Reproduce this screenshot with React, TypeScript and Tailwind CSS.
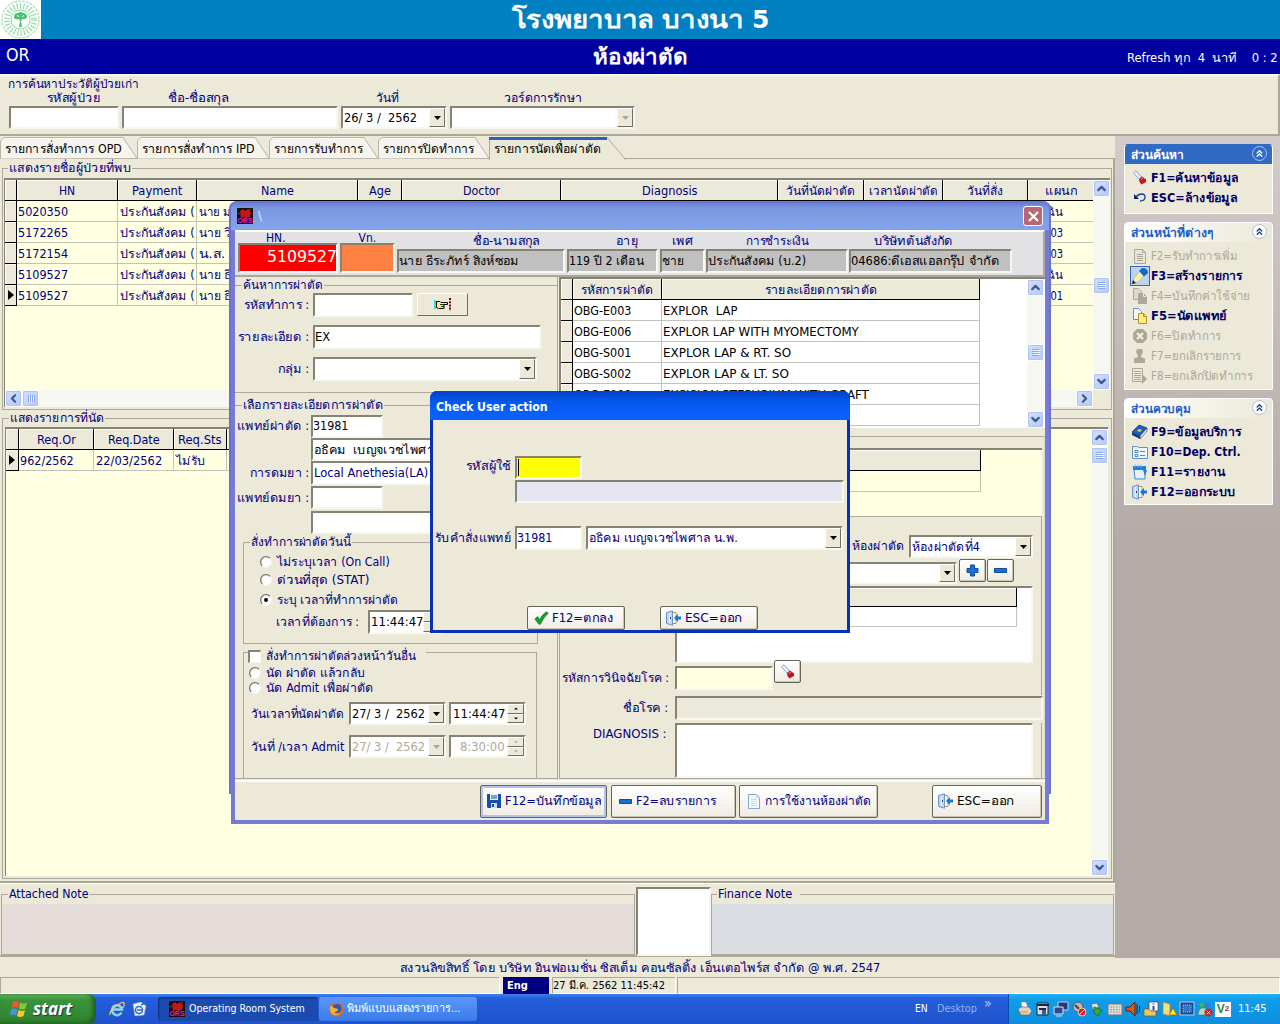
import { useLayoutEffect, useRef, useState, type ReactNode } from "react";
import { ChevronDown, ChevronUp, ChevronLeft, ChevronRight, ChevronsUp } from "lucide-react";

const SUNKEN = "border-2 border-t-[#868375] border-l-[#868375] border-b-[#f8f7f0] border-r-[#f8f7f0]";
const RAISED = "border border-t-white border-l-white border-b-[#716f64] border-r-[#716f64]";
const HEAD = "flex items-center justify-center bg-[#ece9d8] border-r border-b border-black overflow-hidden shadow-[inset_1px_1px_0_#fbfaf4] pt-[1px]";
const XPBTN = "flex items-center rounded-[2px] border border-[#66655a] bg-gradient-to-b from-white to-[#efece2] shadow-[inset_-1px_-1px_0_#c9c5b4]";

/* Text run fitted to a known width. */
function T({ w, c = "", children }: { w: number; c?: string; children: ReactNode }) {
  const ref = useRef<HTMLSpanElement>(null);
  const [k, setK] = useState(1);
  useLayoutEffect(() => {
    if (ref.current) setK(w / ref.current.offsetWidth);
  }, [w, children]);
  return (
    <span className={"inline-block shrink-0 whitespace-pre " + c} style={{ width: w }}>
      <span ref={ref} className="inline-block origin-left" style={{ transform: `scaleX(${k})` }}>{children}</span>
    </span>
  );
}

function Arrow({ dim = false }: { dim?: boolean }) {
  return (
    <span className={"flex h-full w-[16px] shrink-0 items-center justify-center bg-[#ece9d8] " + RAISED}>
      <svg width="7" height="4"><path d="M0 0h7L3.5 4z" fill={dim ? "#aca899" : "#000"} /></svg>
    </span>
  );
}

function Field({ c, children, combo, dim }: { c: string; children?: ReactNode; combo?: boolean; dim?: boolean }) {
  return (
    <div className={"flex shrink-0 items-center overflow-hidden " + SUNKEN + " " + c}>
      <div className="flex h-full flex-1 items-center overflow-hidden">{children}</div>
      {combo && <Arrow dim={dim} />}
    </div>
  );
}

function Spin({ dim = false }: { dim?: boolean }) {
  const f = dim ? "#aca899" : "#000";
  return (
    <span className="flex h-full w-[17px] shrink-0 flex-col">
      <span className={"flex flex-1 items-center justify-center bg-[#ece9d8] " + RAISED}><svg width="4" height="3"><path d="M0 2.5h4L2 .5z" fill={f} /></svg></span>
      <span className={"flex flex-1 items-center justify-center bg-[#ece9d8] " + RAISED}><svg width="4" height="3"><path d="M0 .5h4L2 2.5z" fill={f} /></svg></span>
    </span>
  );
}

function SB({ children }: { children: ReactNode }) {
  return (
    <span className="flex h-[17px] w-[17px] shrink-0 items-center justify-center rounded-[2px] border border-white bg-gradient-to-br from-[#d3e0fd] to-[#b4c9f8] text-[#3f5a8f] shadow-[inset_0_0_0_1px_#b0c4f2]">
      {children}
    </span>
  );
}
const Grip = () => (
  <svg width="8" height="8" stroke="#8ba9ea"><path d="M0 .5h7M0 2.5h7M0 4.5h7M0 6.5h7" /><path d="M1 1.5h7M1 3.5h7M1 5.5h7" stroke="#eef4fe" /></svg>
);

function VScroll({ gap }: { gap: string }) {
  return (
    <div className="flex w-[17px] shrink-0 flex-col bg-[#f7f7f2]">
      <SB><ChevronUp size={13} strokeWidth={4} /></SB>
      <div className={gap} />
      <SB><Grip /></SB>
      <div className="flex-1" />
      <SB><ChevronDown size={13} strokeWidth={4} /></SB>
    </div>
  );
}

function Radio({ on = false }: { on?: boolean }) {
  return (
    <svg width="12" height="12" className="shrink-0">
      <circle cx="6" cy="6" r="5.2" fill="#fff" stroke="#fbfaf5" />
      <path d="M2.2 9.8A5.2 5.2 0 0 1 9.8 2.2" fill="none" stroke="#7d7a6c" strokeWidth="1.3" />
      {on && <circle cx="6" cy="6" r="2" />}
    </svg>
  );
}

/* ---------- icons ---------- */
const Torch = () => (
  <svg width="16" height="16" viewBox="0 0 16 16"><path d="M1.500 3 4 .8 9.500 7 7 9z" fill="#e8f2fb" stroke="#86a8cc" /><path d="M7 9.500 10 6.500 14 9.500 14 12 9.500 14.500 7.500 12z" fill="#c4141c" /><path d="M9 9.500 11 8" stroke="#f79a9a" /></svg>
);
const Undo = () => (
  <svg width="14" height="12" viewBox="0 0 14 12"><path d="M1 2v5h5z" fill="#0a246a" /><path d="M3 5C6 1 12 1 12 5S9 9 7 9" fill="none" stroke="#1c3f94" strokeWidth="1.3" /></svg>
);
const Door = () => (
  <svg width="17" height="16" viewBox="0 0 17 16"><path d="M8 2.500h3v11H8" fill="#fff" stroke="#c08a50" /><path d="M1.500 2.500 7.500.8v14.400l-6-1.700z" fill="#bcd7f5" stroke="#6c92c8" /><path d="M4.500 3v10" stroke="#e9f3fe" /><path d="M5.500 7v2" stroke="#345" /><path d="M9 8l4-4v2.500h3v3h-3V12z" fill="#1976d2" /></svg>
);
const Doc = ({ dim = false }: { dim?: boolean }) => (
  <svg width="14" height="15" viewBox="0 0 14 15"><path d="M1.500.5h8l3 3v11h-11z" fill={dim ? "#e8e6dc" : "#f2f8fe"} stroke={dim ? "#aca899" : "#88a8d4"} /><path d="M9.500.5v3h3M4 5.500h6M4 7.500h6M4 9.500h6M4 11.500h6" fill="none" stroke={dim ? "#aca899" : "#c5dcf2"} /></svg>
);
const Pages = ({ dim = false }: { dim?: boolean }) => (
  <svg width="16" height="16" viewBox="0 0 16 16"><path d="M1.500.5h5l3 3v8h-8z" fill={dim ? "#dcd9cc" : "#f4f9ff"} stroke={dim ? "#aca899" : "#6a90cc"} /><path d="M6.500 5.500h5l3 3v7h-8z" fill={dim ? "#aca899" : "#ffee88"} stroke={dim ? "#aca899" : "#c09018"} /><path d="M11.500 5.500v3h3" fill="none" stroke={dim ? "#ece9d8" : "#c09018"} /></svg>
);
const Pencil = () => (
  <span className="flex h-[20px] w-[20px] items-center justify-center border border-[#316ac5] bg-[#c1d2ee]">
    <svg width="18" height="18" viewBox="0 0 18 18"><path d="M1 17 3 11 9 4 14 8 7 15z" fill="#f7efb0" stroke="#a8a070" strokeWidth=".6" /><path d="M8 4 11 1Q17 1 17 6L13 9.500z" fill="#1767c4" /><path d="M1 17 2 13 5 16z" fill="#222" /></svg>
  </span>
);
const Cross = () => (
  <svg width="16" height="16" viewBox="0 0 16 16"><path d="M5 1h6l4 4v6l-4 4H5l-4-4V5z" fill="#aca899" /><path d="M5 5l6 6M11 5l-6 6" stroke="#f4f2e8" strokeWidth="2" /></svg>
);
const Person = () => (
  <svg width="15" height="16" viewBox="0 0 15 16"><path d="M5 1h5l1 3-2 4v1l4 1.500V15H2v-4.500L6 9V8L4 4z" fill="#aca899" /></svg>
);
const DocArrow = () => (
  <svg width="17" height="16" viewBox="0 0 17 16"><path d="M1.500.5h10v13h-10z" fill="#ece9d8" stroke="#aca899" /><path d="M3 3.500h7M3 5.500h7M3 7.500h7M3 9.500h7M3 11.500h7" stroke="#aca899" /><path d="M11 6l5 5-5 5z" fill="#aca899" /></svg>
);
const Book = () => (
  <svg width="17" height="16" viewBox="0 0 17 16"><path d="M1 8 8 1l8 3-7 8z" fill="#1d62b8" stroke="#0b356e" strokeWidth=".7" /><path d="M1 8v3l8 4V12z" fill="#0e3c7c" /><path d="M9 12v3l7-8V4z" fill="#e6edf6" stroke="#0b356e" strokeWidth=".6" /><path d="M8 5l3 1-2 2-3-1z" fill="#f3c94c" /></svg>
);
const FormIcon = () => (
  <svg width="16" height="14" viewBox="0 0 16 14"><path d="M.5 1.500h5l1 1h9v11H.5z" fill="#edf6ff" stroke="#5b93d0" /><path d="M3 5.500h3v2H3zM3 9.500h3v2H3z" fill="none" stroke="#4f8bcd" /><path d="M8 6.500h5M8 10.500h5" stroke="#4f8bcd" /></svg>
);
const Pad = () => (
  <svg width="16" height="16" viewBox="0 0 16 16"><path d="M2 4.500h11v10.500H3z" fill="#e4f2ff" stroke="#4187ce" /><path d="M1 2h13v4H1z" fill="#1f7fd6" /><path d="M3 .5v3M6 .5v3M9 .5v3" stroke="#7fb8f0" /><path d="M11 6h4l-2 6z" fill="#1f7fd6" /></svg>
);
const Check = () => (
  <svg width="15" height="14" viewBox="0 0 15 14"><path d="M.8 8 3.500 5.500 5.800 8.500Q8.500 3 12.500.8L14.300 2Q9.500 6.500 6.500 13.200H4.800z" fill="#15a22a" stroke="#0a7a1a" strokeWidth=".6" /></svg>
);
const Floppy = () => (
  <svg width="14" height="14" viewBox="0 0 14 14"><path d="M0 0h14v14H1l-1-1z" fill="#174ea6" /><path d="M3 0h8v6H3z" fill="#e8f0fb" /><path d="M4 2h6M4 4h6" stroke="#174ea6" /><path d="M4 9h6v5H4z" fill="#c9dcf4" /><path d="M5 10h2v3H5z" fill="#174ea6" /></svg>
);
const Plus = () => <svg width="13" height="13"><path d="M4.500 1h4v3.500H12v4H8.500V12h-4V8.500H1v-4h3.500z" fill="#1473d0" stroke="#0a4fa0" /></svg>;
const Minus = () => <svg width="13" height="13"><path d="M.5 4.500h12v4H.5z" fill="#1473d0" stroke="#0a4fa0" /></svg>;
const Hand = () => (
  <svg width="18" height="13" viewBox="0 0 18 13"><path d="M0 2h2v9H0z" fill="#2ee0e0" /><path d="M2.500 3.500H6l1 1h6.500v2H10v4H4.500l-2-1z" fill="#f8ec80" stroke="#000" /><path d="M10 8.500H7M6 6.500h4" stroke="#000" strokeWidth=".8" /><path d="M16 0v13" stroke="#800" strokeWidth="2" strokeDasharray="2 1.200" /></svg>
);
function OrsIcon() {
  return (
    <span className="relative flex h-[16px] w-[16px] shrink-0 items-end justify-center overflow-hidden bg-[#180c08]">
      <svg width="16" height="16" className="absolute inset-0"><path d="M3 3 6 1l2 2 3-2 3 3-1 5-3 1-3-1-3 1z" fill="#c2181c" /><path d="M1 5l2 1M12 2l2-1" stroke="#1f7a2c" /></svg>
      <span className="relative font-['Liberation_Sans'] text-[7px] leading-[7px] font-bold text-[#e020c8]">ORS</span>
    </span>
  );
}

function Logo() {
  return (
    <svg width="41" height="39" viewBox="0 0 41 39" className="shrink-0 bg-white">
      <circle cx="20.500" cy="19.500" r="18.500" fill="none" stroke="#a4dfb4" strokeWidth="1.200" strokeDasharray="3 1" />
      <circle cx="20.500" cy="19.500" r="13.500" fill="none" stroke="#94dca8" strokeWidth="6" strokeDasharray="1.200 2.100" />
      <circle cx="20.500" cy="19.500" r="9.500" fill="#fff" stroke="#8fd8a2" />
      <path d="M14 17q0-4 4-4 2.500-2 5 0 4 0 4 4-1 3-5 2l-1 2 1 6h-3l1-6-1-2q-5 1-5-2z" fill="#4cc271" />
      <path d="M17 15.500l2 1M24 15.500l-2 1" stroke="#fff" />
    </svg>
  );
}

/* ---------- top ---------- */
function Search() {
  return (
    <div className="h-[62px] shrink-0 border-t-2 border-r-2 border-b-2 border-t-[#f8f6ec] border-r-[#aca899] border-b-[#aca899] pt-[1px] pl-[8px] leading-[14px]">
      <T w={131} c="block">การค้นหาประวัติผู้ป่วยเก่า</T>
      <div className="-mt-[1px] mb-[1px] flex h-[15px] items-center">
        <T w={53} c="ml-[39px]">รหัสผู้ป่วย</T>
        <T w={61} c="ml-[68px]">ชื่อ-ชื่อสกุล</T>
        <T w={23} c="ml-[147px]">วันที่</T>
        <T w={78} c="ml-[105px]">วอร์ดการรักษา</T>
      </div>
      <div className="flex gap-[3px] pl-[1px]">
        <Field c="h-[23px] w-[110px] bg-white" />
        <Field c="h-[23px] w-[216px] bg-white" />
        <Field c="h-[23px] w-[106px] bg-white" combo><T w={73} c="pl-[1px] text-black">26/ 3 /  2562</T></Field>
        <Field c="h-[23px] w-[185px] bg-white" combo dim />
      </div>
    </div>
  );
}

const TABS: [string, number, number][] = [
  ["รายการสั่งทำการ OPD", 117, 137],
  ["รายการสั่งทำการ IPD", 112, 132],
  ["รายการรับทำการ", 89, 109],
  ["รายการปิดทำการ", 91, 111],
];
function Tabs() {
  return (
    <div className="flex h-[23px] shrink-0 border-b border-[#aca899] pt-[1px]">
      {TABS.map(([t, w, full]) => (
        <div key={t} className="relative flex shrink-0 items-center pt-[2px] pl-[5px]" style={{ width: full }}>
          <svg className="absolute inset-0" width={full} height="22"><path d={`M.5 22V4L4 .5H${full - 14}L${full} 21.500z`} fill="#f6f4ec" stroke="#b8b4a6" /></svg>
          <T w={w} c="relative text-black">{t}</T>
        </div>
      ))}
      <div className="relative flex w-[140px] items-center pt-[2px] pl-[5px]">
        <svg className="absolute inset-0" width="140" height="23"><path d="M.5 23V.5H118L137 23" fill="#ece9d8" stroke="#aca899" /><path d="M0 1.500h118" stroke="#2f62b5" strokeWidth="3" /></svg>
        <T w={107} c="relative text-black">รายการนัดเพื่อผ่าตัด</T>
      </div>
    </div>
  );
}

const COLS = "grid grid-cols-[12px_101px_79px_161px_44px_159px_217px_86px_79px_85px_66px]";
const HEADS: [string, number][] = [["", 1], ["HN", 16], ["Payment", 50], ["Name", 33], ["Age", 22], ["Doctor", 37], ["Diagnosis", 55], ["วันที่นัดผ่าตัด", 69], ["เวลานัดผ่าตัด", 69], ["วันที่สั่ง", 36], ["แผนก", 32]];
const ROWS: [string, string, number, string][] = [
  ["5020350", "นาย มา", 38, "ฉุกเฉิน"],
  ["5172265", "นาย วี", 32, "OPD03"],
  ["5172154", "น.ส. จ", 38, "OPD03"],
  ["5109527", "นาย ธี", 32, "ฉุกเฉิน"],
  ["5109527", "นาย ธี", 32, "OPD01"],
];
const CELL = "flex items-center overflow-hidden border-r border-b border-[#c4c2b8] pt-[2px] pl-[1px]";
const MARK = "flex items-center justify-center border-r border-b border-black bg-[#ece9d8] shadow-[inset_1px_1px_0_#fbfaf4]";
const Tri = () => <svg width="6" height="10"><path d="M0 0l6 5-6 5z" /></svg>;

function PatientGrid() {
  return (
    <fieldset className="ml-[2px] h-[249px] w-[1110px] min-w-0 shrink-0 border border-[#aca899]">
      <legend className="ml-[5px] h-[15px] px-[1px] leading-[14px]"><T w={122}>แสดงรายชื่อผู้ป่วยที่พบ</T></legend>
      <div className="ml-[1px] mt-[2px] flex h-[229px] w-[1106px] border-t-2 border-l border-[#868375] bg-[#ffffe1]">
        <div className="flex min-w-0 flex-1 flex-col overflow-hidden">
          <div className={COLS + " h-[21px] shrink-0"}>
            {HEADS.map(([h, w], i) => <div key={i} className={HEAD}><T w={w}>{h}</T></div>)}
          </div>
          {ROWS.map((r, i) => (
            <div key={i} className={COLS + " h-[21px] shrink-0"}>
              <div className={MARK}>{i === 4 && <Tri />}</div>
              <div className={CELL}><T w={50}>{r[0]}</T></div>
              <div className={CELL}><T w={75} c="ml-[1px]">ประกันสังคม (</T></div>
              <div className={CELL}><T w={r[2]} c="ml-[1px]">{r[1]}</T></div>
              <div className={CELL} /><div className={CELL} /><div className={CELL} /><div className={CELL} /><div className={CELL} /><div className={CELL} />
              <div className={CELL}><T w={34}>{r[3]}</T></div>
            </div>
          ))}
          <div className="flex-1" />
          <div className="flex h-[17px] bg-[#f7f7f2]">
            <SB><ChevronLeft size={13} strokeWidth={4} /></SB>
            <SB><span className="rotate-90"><Grip /></span></SB>
            <div className="flex-1" />
            <SB><ChevronRight size={13} strokeWidth={4} /></SB>
          </div>
        </div>
        <div className="flex flex-col">
          <div className="flex flex-1"><VScroll gap="h-[80px]" /></div>
          <div className="h-[17px] bg-[#ece9d8]" />
        </div>
      </div>
    </fieldset>
  );
}

const C2 = "grid grid-cols-[13px_75px_80px_53px_60px] h-[21px] shrink-0";
function RequestGrid() {
  return (
    <fieldset className="ml-[2px] mt-[1px] h-[468px] w-[1110px] min-w-0 shrink-0 border border-[#aca899]">
      <legend className="ml-[6px] h-[15px] px-[1px] leading-[14px]"><T w={94}>แสดงรายการที่นัด</T></legend>
      <div className="ml-[2px] mt-[1px] flex h-[449px] w-[1103px] border-t-2 border-l border-[#868375] bg-[#ffffe1]">
        <div className="flex-1">
          <div className={C2}>
            <div className={HEAD} /><div className={HEAD}><T w={39}>Req.Or</T></div><div className={HEAD}><T w={52}>Req.Date</T></div><div className={HEAD}><T w={44}>Req.Sts</T></div><div className={HEAD} />
          </div>
          <div className={C2}>
            <div className={MARK}><Tri /></div>
            <div className={CELL}><T w={54}>962/2562</T></div>
            <div className={CELL}><T w={66} c="ml-[1px]">22/03/2562</T></div>
            <div className={CELL}><T w={29} c="ml-[1px]">ไม่รับ</T></div>
            <div className={CELL}><T w={40}>Local</T></div>
          </div>
        </div>
        <VScroll gap="h-[1px]" />
      </div>
    </fieldset>
  );
}

function Notes() {
  return (
    <div className="flex h-[74px] shrink-0 border-t border-b-2 border-t-white border-b-[#aca899] pt-[3px]">
      <fieldset className="ml-[1px] h-[68px] w-[634px] min-w-0 border border-[#aca899]">
        <legend className="ml-[6px] h-[15px] px-[1px] leading-[14px]"><T w={80}>Attached Note</T></legend>
        <div className="mt-[2px] h-[50px] bg-[#e5dbd9]" />
      </fieldset>
      <Field c="ml-[1px] h-[69px] w-[75px] bg-white" />
      <fieldset className="h-[68px] w-[403px] min-w-0 border border-[#aca899]">
        <legend className="ml-[5px] h-[15px] pr-[8px] pl-[1px] leading-[14px]"><T w={74}>Finance Note</T></legend>
        <div className="mt-[2px] h-[50px] bg-[#d9dce1]" />
      </fieldset>
    </div>
  );
}

/* ---------- sidebar ---------- */
type Item = [ReactNode, string, number, boolean];
function Panel({ title, tw, hot, items, c }: { title: string; tw: number; hot?: boolean; items: Item[]; c: string }) {
  return (
    <div className={"flex flex-col rounded-t-[4px] border bg-[#ece9d8] " + (hot ? "border-[#316ac5] border-x-white border-b-white " : "border-white ") + c}>
      <div className={"flex h-[19px] shrink-0 items-center justify-between rounded-t-[3px] pr-[5px] pl-[6px] " + (hot ? "bg-[#316ac5] text-white" : "bg-gradient-to-r from-white to-[#ece9d8] text-[#215dc6]")}>
        <T w={tw} c="font-bold">{title}</T>
        <span className={"-mt-[2px] flex h-[15px] w-[15px] items-center justify-center rounded-full border " + (hot ? "border-[#a9c3ee]" : "border-[#b6bccb] bg-white")}>
          <ChevronsUp size={11} strokeWidth={3} color={hot ? "#fff" : "#1c3f94"} />
        </span>
      </div>
      <div className="mt-[4px] flex flex-col">
        {items.map(([icon, t, w, dim]) => (
          <div key={t} className={"flex h-[20px] items-center pl-[4px] " + (dim ? "text-[#aca899]" : "font-bold text-[#000066]")}>
            <span className="mr-[1px] flex w-[21px] shrink-0 justify-center">{icon}</span>
            <T w={w}>{t}</T>
          </div>
        ))}
      </div>
    </div>
  );
}
function Sidebar() {
  return (
    <div className="flex w-[165px] flex-col gap-[8px] bg-gradient-to-b from-[#d2cbc9] to-[#b4aaa6] to-50% pt-[8px] pl-[9px]">
      <Panel title="ส่วนค้นหา" tw={53} hot c="h-[70px] w-[149px]" items={[[<Torch />, "F1=ค้นหาข้อมูล", 87, false], [<Undo />, "ESC=ล้างข้อมูล", 86, false]]} />
      <Panel title="ส่วนหน้าที่ต่างๆ" tw={82} c="h-[168px] w-[149px]" items={[
        [<Doc dim />, "F2=รับทำการเพิ่ม", 86, true], [<Pencil />, "F3=สร้างรายการ", 91, false], [<Pages dim />, "F4=บันทึกค่าใช้จ่าย", 99, true],
        [<Pages />, "F5=นัดแพทย์", 76, false], [<Cross />, "F6=ปิดทำการ", 70, true], [<Person />, "F7=ยกเลิกรายการ", 90, true], [<DocArrow />, "F8=ยกเลิกปิดทำการ", 102, true],
      ]} />
      <Panel title="ส่วนควบคุม" tw={60} c="h-[107px] w-[149px]" items={[
        [<Book />, "F9=ข้อมูลบริการ", 90, false], [<FormIcon />, "F10=Dep. Ctrl.", 90, false], [<Pad />, "F11=รายงาน", 74, false], [<Door />, "F12=ออกระบบ", 84, false],
      ]} />
    </div>
  );
}

/* ---------- operation window ---------- */
function InfoBox({ label, lw, lc = "", w, text, tw }: { label: string; lw: number; lc?: string; w: string; text: string; tw: number }) {
  return (
    <div className={"flex shrink-0 flex-col items-center " + w}>
      <div className={"flex h-[17px] items-center " + lc}><T w={lw}>{label}</T></div>
      <Field c="h-[24px] w-full bg-[#c0c0c0]"><T w={tw} c="text-black">{text}</T></Field>
    </div>
  );
}

function FormRow({ label, lw, c, children, lead = "w-[74px]" }: { label?: string; lw?: number; c: string; children: ReactNode; lead?: string }) {
  return (
    <div className={"flex items-center " + c}>
      <div className={"flex shrink-0 justify-end " + lead}>{label && <T w={lw!}>{label}</T>}</div>
      {children}
    </div>
  );
}

function LeftForm() {
  return (
    <div className="flex w-[323px] shrink-0 flex-col border-r border-[#aca899] pt-[1px]">
      <fieldset className="h-[115px] min-w-0 border-y border-[#aca899]">
        <legend className="ml-[7px] h-[14px] px-[1px] leading-[14px]"><T w={80}>ค้นหาการผ่าตัด</T></legend>
        <FormRow label="รหัสทำการ :" lw={65} c="mt-[1px] h-[23px]">
          <Field c="ml-[4px] h-[24px] w-[100px] bg-white" />
          <div className={"ml-[4px] flex h-[23px] w-[51px] items-center justify-center bg-[#ece9d8] " + RAISED}><Hand /></div>
        </FormRow>
        <FormRow label="รายละเอียด :" lw={71} c="mt-[9px] h-[23px]"><Field c="ml-[4px] h-[24px] w-[228px] bg-white"><T w={15} c="text-black">EX</T></Field></FormRow>
        <FormRow label="กลุ่ม :" lw={31} c="mt-[9px] h-[23px]"><Field c="ml-[4px] h-[24px] w-[224px] bg-white" combo /></FormRow>
      </fieldset>
      <fieldset className="mt-[5px] h-[381px] min-w-0 overflow-hidden border-y border-[#aca899]">
        <legend className="ml-[7px] h-[14px] px-[1px] leading-[14px]"><T w={140}>เลือกรายละเอียดการผ่าตัด</T></legend>
        <FormRow label="แพทย์ผ่าตัด :" lw={72} c="mt-[3px] h-[22px]"><Field c="ml-[2px] h-[23px] w-[72px] bg-white"><T w={35} c="text-black">31981</T></Field></FormRow>
        <FormRow c="mt-[1px] h-[23px]"><Field c="ml-[2px] h-[23px] w-[200px] bg-white"><T w={155} c="pl-[1px] text-black">อธิคม  เบญจเวชไพศาล น.พ.</T></Field></FormRow>
        <FormRow label="การดมยา :" lw={59} c="h-[23px]"><Field c="ml-[2px] h-[24px] w-[200px] bg-white"><T w={114} c="ml-[1px]">Local Anethesia(LA)</T></Field></FormRow>
        <FormRow label="แพทย์ดมยา :" lw={72} c="mt-[2px] h-[23px]"><Field c="ml-[2px] h-[23px] w-[72px] bg-white" /></FormRow>
        <FormRow c="mt-[2px] h-[22px]"><Field c="ml-[2px] h-[23px] w-[200px] bg-white" /></FormRow>
        <fieldset className="mt-[2px] ml-[8px] h-[109px] w-[295px] min-w-0 border border-[#aca899]">
          <legend className="ml-[6px] h-[14px] px-[1px] leading-[14px]"><T w={100}>สั่งทำการผ่าตัดวันนี้</T></legend>
          <div className="mt-[4px] flex h-[18px] items-center pl-[16px]"><Radio /><T w={113} c="ml-[5px]">ไม่ระบุเวลา (On Call)</T></div>
          <div className="flex h-[18px] items-center pl-[16px]"><Radio /><T w={92} c="ml-[5px]">ด่วนที่สุด (STAT)</T></div>
          <div className="mt-[2px] flex h-[18px] items-center pl-[16px]"><Radio on /><T w={121} c="ml-[5px]">ระบุ เวลาที่ทำการผ่าตัด</T></div>
          <div className="mt-[1px] flex h-[24px] items-center pl-[32px]"><T w={83}>เวลาที่ต้องการ :</T><Field c="ml-[9px] h-[24px] w-[76px] bg-white"><T w={52} c="ml-[1px] text-black">11:44:47</T><Spin /></Field></div>
        </fieldset>
        <fieldset className="mt-[1px] ml-[8px] h-[136px] w-[294px] min-w-0 border border-[#aca899]">
          <legend className="ml-[4px] h-[14px] pr-[10px]">
            <span className="relative top-[4px] flex h-[14px] items-center"><span className="h-[13px] w-[13px] border border-t-2 border-l-2 border-[#f8f7f0] border-t-[#868375] border-l-[#868375] bg-white" /><T w={150} c="ml-[5px]">สั่งทำการผ่าตัดล่วงหน้าวันอื่น</T></span>
          </legend>
          <div className="mt-[6px] flex h-[15px] items-center pl-[5px]"><Radio /><T w={99} c="ml-[5px]">นัด ผ่าตัด แล้วกลับ</T></div>
          <div className="flex h-[16px] items-center pl-[5px]"><Radio /><T w={108} c="ml-[5px]">นัด Admit เพื่อผ่าตัด</T></div>
          <div className="mt-[6px] flex h-[23px] items-center pl-[7px]"><T w={93}>วันเวลาที่นัดผ่าตัด</T>
            <Field c="ml-[5px] h-[23px] w-[97px] bg-white" combo><T w={73} c="ml-[1px] text-black">27/ 3 /  2562</T></Field>
            <Field c="ml-[3px] h-[23px] w-[77px] bg-white"><T w={52} c="mx-[2px] text-black">11:44:47</T><Spin /></Field></div>
          <div className="mt-[10px] flex h-[23px] items-center pl-[7px]"><T w={93}>วันที่ /เวลา Admit</T>
            <Field c="ml-[5px] h-[23px] w-[97px] bg-white" combo dim><T w={73} c="ml-[1px] text-[#aca899]">27/ 3 /  2562</T></Field>
            <Field c="ml-[3px] h-[23px] w-[77px] bg-white"><T w={45} c="mr-[2px] ml-[9px] text-[#aca899]">8:30:00</T><Spin dim /></Field></div>
        </fieldset>
      </fieldset>
    </div>
  );
}

const OPS: [string, string, number][] = [
  ["OBG-E003", "EXPLOR  LAP", 74], ["OBG-E006", "EXPLOR LAP WITH MYOMECTOMY", 196], ["OBG-S001", "EXPLOR LAP & RT. SO", 128],
  ["OBG-S002", "EXPLOR LAP & LT. SO", 126], ["OBG-E008", "EXCISION PTERYGIUM WITH GRAFT", 206], ["", "", 1],
];
const C3 = "grid grid-cols-[12px_89px_318px] shrink-0 h-[21px]";
function RightForm() {
  return (
    <div className="flex min-w-0 flex-1 flex-col pl-[1px]">
      <div className="flex h-[151px] shrink-0 overflow-hidden border-t-2 border-l-2 border-[#868375] bg-white">
        <div className="flex-1">
          <div className={C3}><div className={HEAD} /><div className={HEAD}><T w={72}>รหัสการผ่าตัด</T></div><div className={HEAD}><T w={112}>รายละเอียดการผ่าตัด</T></div></div>
          {OPS.map(([a, b, w], i) => (
            <div key={i} className={C3}><div className={MARK} /><div className={CELL + " text-black"}>{a && <T w={57}>{a}</T>}</div><div className={CELL + " text-black"}><T w={w}>{b}</T></div></div>
          ))}
        </div>
        <div className="flex pr-[1px]"><VScroll gap="h-[48px]" /></div>
      </div>
      <div className="mt-[8px] flex h-[343px] flex-col border border-[#aca899] border-r-[#dedacb]">
        <div className="mt-[11px] h-[68px] w-[482px] shrink-0 border-t-2 border-[#868375] bg-[#ffffe1]">
          <div className={HEAD + " h-[21px] w-[421px]"} />
          <div className={CELL + " h-[21px] w-[421px]"} />
        </div>
        <div className="flex h-[42px] w-[482px] shrink-0 items-end justify-end border-t border-r border-[#aca899] pr-[8px]">
          <T w={52} c="mb-[4px]">ห้องผ่าตัด</T>
          <Field c="ml-[5px] h-[23px] w-[124px] bg-white" combo><T w={68} c="ml-[1px]">ห้องผ่าตัดที่4</T></Field>
        </div>
        <div className="flex h-[28px] w-[482px] items-center border-r border-[#aca899] pl-[115px]">
          <Field c="mt-[2px] h-[22px] w-[282px] bg-white" combo />
          <div className={XPBTN + " -mt-[3px] ml-[2px] h-[23px] w-[27px] justify-center"}><Plus /></div>
          <div className={XPBTN + " -mt-[3px] ml-[1px] h-[23px] w-[27px] justify-center"}><Minus /></div>
        </div>
        <div className="w-[482px] shrink-0 border-r border-[#aca899] pl-[115px]">
          <div className={"h-[77px] w-[358px] bg-white " + SUNKEN}>
            <div className={HEAD + " h-[19px] w-[340px]"} />
            <div className={CELL + " h-[20px] w-[340px]"} />
          </div>
        </div>
        <div className="flex h-[32px] w-[482px] items-start border-r border-[#aca899] pl-[2px]">
          <T w={107} c="mt-[7px]">รหัสการวินิจฉัยโรค :</T>
          <Field c="mt-[3px] ml-[6px] h-[24px] w-[98px] bg-[#ffffe1]" />
          <div className={XPBTN + " -mt-[3px] ml-[1px] h-[23px] w-[27px] justify-center"}><Torch /></div>
        </div>
        <div className="flex h-[25px] items-center">
          <div className="flex w-[108px] justify-end"><T w={45}>ชื่อโรค :</T></div>
          <Field c="ml-[7px] h-[24px] w-[368px] bg-[#ece9d8]" />
        </div>
        <div className="mt-[3px] flex min-h-0 w-[482px] flex-1 border-r border-[#aca899]">
          <div className="flex w-[107px] justify-end pt-[3px]"><T w={74}>DIAGNOSIS :</T></div>
          <Field c="ml-[8px] h-full w-[358px] bg-white" />
        </div>
      </div>
    </div>
  );
}

function OperationWindow() {
  return (
    <div className="absolute top-[201px] left-[229px] h-[593px] w-[822px] rounded-t-[8px] bg-[#6a70cc]">
      <div className="absolute top-0 left-[2px] flex h-[623px] w-[818px] flex-col rounded-t-[8px] bg-[#777bd3] px-[4px] pb-[4px]">
        <div className="-mx-[4px] flex h-[29px] shrink-0 items-center rounded-t-[8px] bg-gradient-to-b from-[#6375cf] via-[#7c97e2] via-25% to-[#82a4ea] px-[6px]">
          <OrsIcon /><span className="ml-[5px] font-bold text-[#d8e2f8]">\</span>
          <div className="mt-[1px] ml-auto flex h-[20px] w-[20px] items-center justify-center rounded-[3px] border border-white bg-[#bb6672]"><svg width="11" height="11"><path d="M1 1l9 9M10 1l-9 9" stroke="#fff" strokeWidth="2.200" /></svg></div>
        </div>
        <div className="flex min-h-0 flex-1 flex-col bg-[#ece9d8]">
          <div className="flex h-[47px] shrink-0 gap-[2px] border-t-2 border-r-2 border-b-2 border-t-white border-r-[#aca899] border-b-[#aca899] bg-[#e2e1e3] pl-[3px]">
            <div className="flex w-[100px] shrink-0 flex-col"><div className="flex h-[11px] items-center justify-center pr-[24px]"><T w={20}>HN.</T></div><Field c="h-[30px] bg-[#ff0000]"><T w={70} c="mr-[-1px] mb-[2px] ml-auto text-[16px] text-white">5109527</T></Field></div>
            <div className="flex w-[55px] shrink-0 flex-col"><div className="flex h-[11px] items-center justify-center"><T w={18}>Vn.</T></div><Field c="h-[30px] bg-[#ff8040]" /></div>
            <InfoBox label="ชื่อ-นามสกุล" lw={67} lc="pl-[50px]" w="w-[168px]" text="นาย ธีระภัทร์ สิงห์ซอม" tw={120} />
            <InfoBox label="อายุ" lw={22} lc="pl-[28px]" w="w-[91px]" text="119 ปี 2 เดือน" tw={75} />
            <InfoBox label="เพศ" lw={21} w="w-[45px]" text="ชาย" tw={22} />
            <InfoBox label="การชำระเงิน" lw={63} w="-ml-[1px] w-[142px]" text="ประกันสังคม (บ.2)" tw={98} />
            <InfoBox label="บริษัทต้นสังกัด" lw={79} lc="pr-[34px]" w="-ml-[1px] w-[163px]" text="04686:ดีเอสแอลกรุ๊ป จำกัด" tw={148} />
          </div>
          <div className="flex h-[503px] shrink-0"><LeftForm /><RightForm /></div>
          <div className="flex flex-1 items-center border-t-2 border-white pl-[245px]">
            <div className={XPBTN + " h-[33px] w-[127px] pl-[6px] shadow-[inset_0_0_0_2px_#b4c3ee]"}><Floppy /><T w={96} c="ml-[4px]">F12=บันทึกข้อมูล</T></div>
            <div className={XPBTN + " ml-[4px] h-[33px] w-[125px] pl-[7px]"}><Minus /><T w={80} c="ml-[4px]">F2=ลบรายการ</T></div>
            <div className={XPBTN + " ml-[3px] h-[33px] w-[139px] pl-[7px]"}><Doc /><T w={106} c="ml-[4px]">การใช้งานห้องผ่าตัด</T></div>
            <div className={XPBTN + " ml-[54px] h-[33px] w-[110px] pl-[4px]"}><Door /><T w={57} c="ml-[3px] text-black">ESC=ออก</T></div>
          </div>
        </div>
      </div>
    </div>
  );
}

function Dialog() {
  return (
    <div className="absolute top-[391px] left-[430px] flex h-[242px] w-[420px] flex-col rounded-t-[7px] bg-[#0831b8] px-[3px] pb-[3px]">
      <div className="-mx-[3px] flex h-[29px] shrink-0 items-center rounded-t-[7px] bg-gradient-to-b from-[#0044c8] via-[#0559f0] via-40% to-[#0a62ff] pt-[3px] pl-[6px]">
        <T w={112} c="text-[13px] font-bold text-white">Check User action</T>
      </div>
      <div className="flex-1 bg-[#ece9d8]">
        <div className="mt-[36px] flex h-[23px] items-center"><div className="mb-[3px] flex w-[78px] justify-end"><T w={45}>รหัสผู้ใช้</T></div><Field c="ml-[4px] h-[23px] w-[67px] bg-[#ffff00]"><span className="ml-[1px] h-[17px] w-px bg-black" /></Field></div>
        <Field c="mt-[1px] ml-[82px] h-[23px] w-[329px] bg-[#e6e6f2]" />
        <div className="mt-[23px] flex h-[23px] items-center"><div className="flex w-[78px] justify-end"><T w={76}>รับคำสั่งแพทย์</T></div><Field c="ml-[4px] h-[24px] w-[67px] bg-white"><T w={35}>31981</T></Field>
          <Field c="ml-[4px] h-[24px] w-[257px] bg-white" combo><T w={149} c="ml-[1px]">อธิคม เบญจเวชไพศาล น.พ.</T></Field></div>
        <div className="mt-[57px] flex pl-[94px]">
          <div className={XPBTN + " h-[24px] w-[98px] pl-[6px]"}><Check /><T w={61} c="ml-[3px]">F12=ตกลง</T></div>
          <div className={XPBTN + " ml-[35px] h-[24px] w-[98px] pl-[4px]"}><Door /><T w={57} c="ml-[3px]">ESC=ออก</T></div>
        </div>
      </div>
    </div>
  );
}

/* ---------- taskbar ---------- */
const TRAY: ReactNode[] = [
  <><path d="M4 1h5l2 6H5z" fill="#fff" stroke="#888" strokeWidth=".6" /><path d="M1 8l3-2h8l3 4-3 4H4z" fill="#d8d8d0" stroke="#666" strokeWidth=".7" /><path d="M4 11h7" stroke="#e8b830" strokeWidth="2" /></>,
  <><path d="M2 2h11v12H2z" fill="#d5dde8" stroke="#223" /><path d="M2 4h12M4 8h7" stroke="#223" strokeWidth="2" /><path d="M7 9h4v5H7z" fill="#3a5c98" /></>,
  <><path d="M5 1h10v8H5z" fill="#223c78" stroke="#c8cfe0" /><path d="M1 6h9v7H1z" fill="#2c4a90" stroke="#dfe4ef" /><path d="M3 15h6" stroke="#ddd" /></>,
  <><circle cx="7" cy="6" r="5" fill="#b8b8b8" stroke="#555" /><path d="M4 4l5 5" stroke="#444" strokeWidth="2" /><circle cx="11" cy="11" r="4" fill="#d02818" stroke="#fff" strokeWidth=".7" /><path d="M8.500 13.500l5-5" stroke="#fff" /></>,
  <><path d="M2 3l6-1 2 4-6 3z" fill="#d8dde0" stroke="#555" strokeWidth=".6" /><path d="M5 6l8 3-4 6-4-3z" fill="#34a83c" stroke="#0c6418" strokeWidth=".7" /></>,
  <><path d="M1 3h14v11H1z" fill="#dcdcd4" stroke="#777" /><path d="M3 6h10M3 8.500h10M3 11h10" stroke="#999" strokeDasharray="2 1" /></>,
  <><path d="M1 6h4l5-5v14l-5-5H1z" fill="#d65a1c" stroke="#401808" strokeWidth=".8" /><path d="M12 3v10M14.500 5v6" stroke="#401808" /></>,
  <><path d="M6 1h9v9H6z" fill="#fff" stroke="#446" strokeWidth=".7" /><path d="M10.500 2.500v1M10.500 5v4" stroke="#2045c0" strokeWidth="2" /><path d="M1 8h5l2 2h5v5H1z" fill="#e8c860" stroke="#7a5c10" strokeWidth=".7" /></>,
  <><path d="M2 1l7 2v12l-7-2z" fill="#f6de78" stroke="#a88020" strokeWidth=".7" /><path d="M8 14l4-7 4 7z" fill="#ffe030" stroke="#806000" strokeWidth=".6" /></>,
  <><path d="M1 1h14v13H1z" fill="#184c98" stroke="#b8cce8" /><path d="M4 4h8v7H4z" fill="#2f78c8" stroke="#9cc4f0" strokeDasharray="1 1" /></>,
  <><circle cx="5" cy="4" r="2.500" fill="#40b060" /><circle cx="10" cy="4" r="2.500" fill="#3878d8" /><path d="M1 14q1-8 5-7 5-1 6 7z" fill="#b8d8c0" stroke="#276" strokeWidth=".5" /><circle cx="11.500" cy="11.500" r="4" fill="#d82020" /><path d="M9.800 9.800l3.400 3.400M13.200 9.800l-3.400 3.400" stroke="#fff" /></>,
];

function Taskbar() {
  return (
    <div className="flex h-[30px] shrink-0 items-stretch bg-gradient-to-b from-[#3c80f0] via-[#245edb] via-15% to-[#1f52cb] font-['DejaVu_Sans_Condensed','Noto_Sans',sans-serif] text-[11px] text-white">
      <div className="flex w-[96px] items-center rounded-r-[8px] bg-gradient-to-b from-[#5fb35f] via-[#3a943a] via-20% to-[#2f812f] pl-[10px] shadow-[inset_-3px_-1px_4px_#1c5c1c]">
        <svg width="19" height="18" viewBox="0 0 19 18"><path d="M3 2q3-2 6 0L8 8Q5 6 1.500 8z" fill="#f0562c" /><path d="M10 2.500q3 2 7 0L15.500 8.500q-4 2-6.500 0z" fill="#84c63c" /><path d="M1 9.500q3-2 6.500 0L6 15.500q-3-2-6 0z" fill="#4a90f0" /><path d="M8.500 10q3 2 6.500 0l-1.500 6q-3.500 2-6.500 0z" fill="#fbc828" /></svg>
        <T w={39} c="ml-[4px] font-['Noto_Sans'] text-[17px] font-bold italic [text-shadow:1px_1px_1px_#234]">start</T>
      </div>
      <div className="flex w-[62px] items-center gap-[7px] pl-[13px]">
        <svg width="16" height="16" viewBox="0 0 16 16"><path d="M12.500 11.500A5 5 0 1 1 13 8.500H4" fill="none" stroke="#8ed2fb" strokeWidth="2.500" /><path d="M1 14Q0 10 7 5t8-3q1 3-2 5" fill="none" stroke="#f5cf50" strokeWidth="1.200" /></svg>
        <svg width="15" height="16" viewBox="0 0 15 16"><path d="M1 3l8-2 5 4-2 9-9 1z" fill="#e9f2fb" stroke="#9ab" strokeWidth=".6" /><circle cx="7" cy="9" r="3.500" fill="none" stroke="#2c70c0" strokeWidth="1.500" /><path d="M5 9h5M9 4l4-2" stroke="#2c70c0" strokeWidth="1.500" /></svg>
      </div>
      <div className="my-[3px] flex w-[160px] items-center rounded-[3px] bg-[#1c4bb0] pl-[11px] shadow-[inset_1px_1px_2px_#0f2f80]"><OrsIcon /><T w={116} c="ml-[4px]">Operating Room System</T></div>
      <div className="my-[3px] ml-[1px] flex w-[158px] items-center rounded-[3px] bg-gradient-to-b from-[#5a97f8] to-[#3a7bec] pl-[10px]">
        <svg width="15" height="15" viewBox="0 0 15 15"><circle cx="7.500" cy="7.500" r="7" fill="#e66a18" /><circle cx="8" cy="6.500" r="4.500" fill="#2a5cb8" /><path d="M1 4q3 0 4 2l4 1q-1 4-5 3 3 3 7 1-2 3-6 2Q0 11 1 4z" fill="#f8b030" /></svg>
        <T w={113} c="ml-[3px]">พิมพ์แบบแสดงรายการ...</T>
      </div>
      <div className="ml-auto flex w-[93px] items-center"><T w={13}>EN</T><T w={40} c="ml-[9px] text-[#8fb4f4]">Desktop</T><span className="mb-[12px] ml-[7px] text-[14px] text-[#b8d0f8]">»</span></div>
      <div className="flex w-[272px] items-center gap-[2px] border-l border-[#0c48a8] bg-gradient-to-b from-[#1fb0f4] via-[#119ce8] via-20% to-[#0e8ee0] pl-[8px]">
        {TRAY.map((n, i) => <svg key={i} width="16" height="16" viewBox="0 0 16 16" className="shrink-0">{n}</svg>)}
        <span className="flex h-[15px] w-[16px] shrink-0 items-center justify-center bg-white font-['Liberation_Sans'] text-[12px] leading-none font-bold text-[#149040]">V<span className="text-[8px] text-[#c82020]">2</span></span>
        <T w={29} c="ml-[5px]">11:45</T>
      </div>
    </div>
  );
}

export default function App() {
  return (
    <div className="relative flex h-[1024px] w-[1280px] flex-col overflow-hidden bg-[#ece9d8] font-['DejaVu_Sans_Condensed','Noto_Sans',sans-serif] text-[12px] leading-[16px] text-[#000080]">
      <div className="grid h-[39px] shrink-0 grid-cols-[41px_1fr_41px] bg-[#0080c0]">
        <Logo />
        <div className="flex items-center justify-center pt-[1px] text-[25px] font-bold text-white"><T w={257}>โรงพยาบาล บางนา 5</T></div>
      </div>
      <div className="grid h-[35px] shrink-0 grid-cols-[200px_1fr_200px] items-center bg-[#0000a0] text-white">
        <T w={24} c="mb-[4px] ml-[6px] text-[17px]">OR</T>
        <div className="flex justify-center text-[21px] font-bold"><T w={95}>ห้องผ่าตัด</T></div>
        <div className="flex justify-end pt-[2px] pr-[2px]"><T w={151}>Refresh ทุก  4  นาที    0 : 2</T></div>
      </div>
      <Search />
      <div className="flex h-[822px] shrink-0">
        <div className="flex w-[1115px] flex-col">
          <Tabs />
          <div className="flex h-[724px] flex-col border-r-2 border-b-2 border-[#aca899] pt-[2px]">
            <PatientGrid />
            <RequestGrid />
          </div>
          <Notes />
        </div>
        <Sidebar />
      </div>
      <div className="flex h-[19px] shrink-0 items-center justify-center"><T w={480}>สงวนลิขสิทธิ์ โดย บริษัท อินฟอเมชั่น ซิสเต็ม คอนซัลติ้ง เอ็นเตอไพร์ส จำกัด @ พ.ศ. 2547</T></div>
      <div className="flex h-[17px] shrink-0 text-[11px] text-black">
        <div className="w-[500px] border border-[#aca899] border-r-white border-b-white" />
        <div className="ml-[3px] flex w-[46px] items-center bg-[#000080] pl-[4px] font-bold text-white"><T w={21}>Eng</T></div>
        <div className="ml-[3px] flex w-[124px] items-center border border-[#aca899] border-r-white border-b-white"><T w={112}>27 มี.ค. 2562 11:45:42</T></div>
        <div className="ml-[1px] flex-1 border border-[#aca899] border-r-white border-b-white" />
      </div>
      <Taskbar />
      <OperationWindow />
      <Dialog />
    </div>
  );
}
